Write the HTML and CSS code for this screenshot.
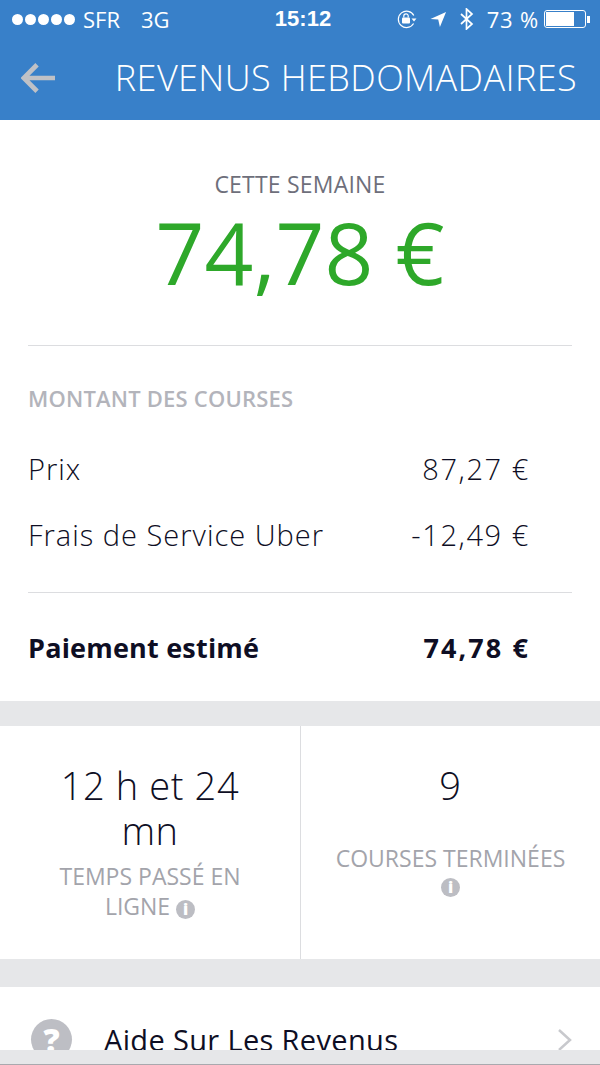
FILE: index.html
```html
<!DOCTYPE html>
<html lang="fr">
<head>
    <meta charset="UTF-8">
    <meta name="viewport" content="width=device-width, initial-scale=1.0">
    <title>Revenus hebdomadaires</title>
    <link rel="stylesheet" href="styles.css">
</head>
<body>

<header class="top">
    <div class="status">
        <div class="status-left">
            <span class="dots"><i></i><i></i><i></i><i></i><i></i></span>
            <span class="carrier">SFR</span>
            <span class="net">3G</span>
        </div>
        <div class="clock">15:12</div>
        <div class="status-right">
            <svg class="ic-lock" width="22" height="22" viewBox="0 0 22 20"><path d="M17.6 14.5A8.2 8.2 0 1 1 17.8 6.5" fill="none" stroke="#fff" stroke-width="1.2"/><path d="M15.5 9.5h5l-2.500 3z" fill="#fff"/><rect x="6" y="8.500" width="8" height="6" rx="1" fill="#fff"/><path d="M7.800 8.500V7a2.200 2.200 0 0 1 4.400 0v1.500" fill="none" stroke="#fff" stroke-width="1.200"/></svg>
            <svg class="ic-loc" width="17" height="17" viewBox="0 0 18 18"><path d="M0.500 8.500L17 1l-6.500 16-1.800-8z" fill="#fff"/></svg>
            <svg class="ic-bt" width="16" height="22" viewBox="0 0 16 22"><path d="M2 6l11 10-5.500 5V1L13 6 2 16" fill="none" stroke="#fff" stroke-width="1.700"/></svg>
            <span class="pct">73 %</span>
            <span class="battery"><span class="battery-level"></span></span>
            <span class="battery-tip"></span>
        </div>
    </div>
    <div class="navbar">
        <svg class="back" width="34" height="34" viewBox="0 0 36 34"><path d="M17 3L3 17l14 14M3 17h33" fill="none" stroke="#bfc1c6" stroke-width="5"/></svg>
        <h1>REVENUS HEBDOMADAIRES</h1>
    </div>
</header>

<section class="summary">
    <div class="week">
        <p class="week-label">CETTE SEMAINE</p>
        <p class="week-total">74,78 €</p>
    </div>
    <div class="details">
        <h2>MONTANT DES COURSES</h2>
        <div class="line"><span>Prix</span><span class="amount">87,27 €</span></div>
        <div class="line"><span>Frais de Service Uber</span><span class="amount">-12,49 €</span></div>
    </div>
    <div class="line payout"><span>Paiement estimé</span><span class="payout-value">74,78 €</span></div>
</section>

<section class="stats">
    <div class="stat">
        <p class="stat-value">12 h et 24 mn</p>
        <p class="stat-label">TEMPS PASSÉ EN LIGNE <span class="info">i</span></p>
    </div>
    <div class="stat stat-count">
        <p class="stat-value">9</p>
        <p class="stat-label">COURSES TERMINÉES <span class="info">i</span></p>
    </div>
</section>

<section class="help">
    <span class="help-icon">?</span>
    <span class="help-text">Aide Sur Les Revenus</span>
    <svg class="chevron" width="16" height="24" viewBox="0 0 16 24"><path d="M2 2l11 10L2 22" fill="none" stroke="#c8c9cd" stroke-width="2.500"/></svg>
</section>

<div class="bottom"></div>

</body>
</html>
```

FILE: styles.css
```css
* {
    margin: 0;
    padding: 0;
    box-sizing: border-box;
    font-family: "Open Sans", sans-serif;
}

body {
    width: 600px;
    height: 1065px;
    overflow: hidden;
    background-color: #e6e7e9;
    color: #0e0e24;
}

.top {
    background-color: #3880c9;
    color: white;
    height: 120px;
}

.status {
    display: grid;
    grid-template-columns: 1fr auto 1fr;
    align-items: center;
    height: 40px;
    padding: 0 10px 2px 12px;
}

.status-left {
    display: flex;
    align-items: center;
    font-size: 22px;
}

.dots {
    display: flex;
    gap: 2px;
    margin-right: 8px;
}

.dots i {
    width: 11px;
    height: 11px;
    border-radius: 50%;
    background: white;
}

.net {
    margin-left: 21px;
}

.clock {
    font-family: "Liberation Sans", sans-serif;
    font-size: 22px;
    font-weight: bold;
    padding-left: 4px;
}

.status-right {
    display: flex;
    align-items: center;
    justify-content: flex-end;
    gap: 12px;
    font-size: 22px;
}

.pct {
    white-space: nowrap;
    letter-spacing: 0.8px;
}

.battery {
    width: 42px;
    height: 18px;
    border: 1px solid white;
    border-radius: 3px;
    padding: 1px;
    display: block;
    margin-left: -7px;
}

.battery-level {
    display: block;
    width: 73%;
    height: 100%;
    background: white;
}

.battery-tip {
    width: 3px;
    height: 7px;
    background: white;
    margin-left: -11px;
}

.navbar {
    display: flex;
    align-items: center;
    justify-content: space-between;
    padding: 0 23px 5px 21px;
    height: 80px;
}

.navbar h1 {
    font-size: 36px;
    font-weight: 300;
    letter-spacing: 0.4px;
    white-space: nowrap;
}

.summary {
    background: white;
    padding: 0 28px;
    height: 581px;
}

.week {
    text-align: center;
    padding-top: 49px;
    height: 226px;
    border-bottom: 1px solid #dcdde0;
}

.week-label {
    font-size: 23px;
    letter-spacing: 0.2px;
    color: #6e6f7b;
    line-height: 30px;
}

.week-total {
    font-size: 85.500px;
    font-weight: 400;
    color: #2ea82a;
    line-height: 100px;
    margin-top: 3px;
}

.details {
    height: 247px;
    padding-top: 37px;
    border-bottom: 1px solid #dcdde0;
}

.details h2 {
    font-size: 22px;
    font-weight: 600;
    letter-spacing: 0.2px;
    color: #b3b4bb;
    line-height: 30px;
    margin-bottom: 36px;
}

.line {
    display: flex;
    justify-content: space-between;
    padding-right: 44px;
    font-size: 29px;
    letter-spacing: 1px;
    line-height: 40px;
    margin-bottom: 26px;
    font-weight: 300;
}

.amount {
    letter-spacing: 1.6px;
    margin-right: -2px;
}

.payout {
    font-size: 27px;
    font-weight: 700;
    letter-spacing: 0.2px;
    margin: 0;
    padding-top: 35px;
    line-height: 40px;
}

.payout-value {
    letter-spacing: 2.100px;
    margin-right: -2px;
}

.stats {
    display: flex;
    background: white;
    margin-top: 25px;
    height: 233px;
}

.stat {
    width: 50%;
    text-align: center;
    padding: 37px 40px 0;
}

.stat + .stat {
    border-left: 1px solid #dcdde0;
}

.stat-value {
    font-size: 38px;
    font-weight: 300;
    letter-spacing: 0.6px;
    line-height: 45px;
}

.stat-label {
    margin-top: 8px;
    font-size: 23px;
    line-height: 30px;
    color: #a3a4ab;
}

.stat-count {
    padding: 37px 30px 0;
}

.stat-count .stat-label {
    margin-top: 37px;
    line-height: 26px;
}

.info {
    display: inline-block;
    width: 19px;
    height: 19px;
    border-radius: 50%;
    background: #bcbdc3;
    color: white;
    font-size: 16px;
    font-weight: 800;
    line-height: 19px;
    vertical-align: 0;
}

.help {
    display: flex;
    align-items: flex-start;
    background: white;
    margin-top: 28px;
    height: 63px;
    overflow: hidden;
    padding: 32px 27px 0 31px;
}

.help-icon {
    flex: none;
    width: 41px;
    height: 41px;
    border-radius: 50%;
    background: #bdbec4;
    color: white;
    font-size: 32px;
    font-weight: 800;
    line-height: 41px;
    text-align: center;
    margin-right: 32px;
}

.help-text {
    font-size: 29px;
    letter-spacing: 0.35px;
    line-height: 40px;
    flex: 1;
    margin-top: 1px;
}

.chevron {
    margin-top: 9px;
}

.bottom {
    height: 15px;
    border-bottom: 1px solid #a9a9ae;
}
```
